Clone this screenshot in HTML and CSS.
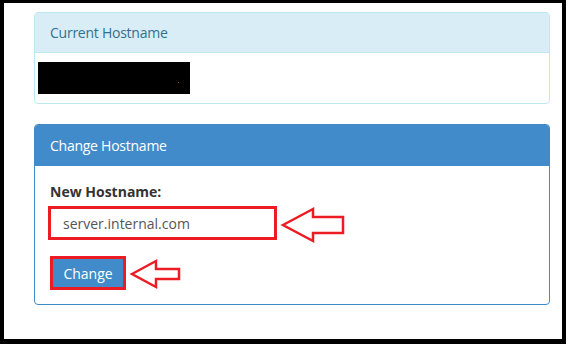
FILE: index.html
```html
<!DOCTYPE html>
<html lang="en">
  <head>
    <meta charset="UTF-8" />
    <link rel="stylesheet" href="styles.css">
  </head>
  <body>
    <div class="frame">
      <div class="panel panel-info">
        <div class="panel-heading">Current Hostname</div>
        <div class="panel-body current-body">
          <div class="redacted"><span class="dot"></span></div>
        </div>
      </div>

      <div class="panel panel-primary">
        <div class="panel-heading">Change Hostname</div>
        <div class="panel-body change-body">
          <label class="field-label" for="hostname">New Hostname:</label>
          <div class="mark input-mark">
            <input type="text" id="hostname" value="server.internal.com" />
          </div>
          <div class="mark button-mark">
            <button id="change-button" type="button">Change</button>
          </div>
        </div>
      </div>
    </div>

    <!-- annotation arrows drawn over the screenshot -->
    <svg class="arrows" width="566" height="344" viewBox="0 0 566 344">
      <polygon points="283,225 313,209 313,217 343,217 343,233 313,233 313,241" />
      <polygon points="132,274 156,261 156,269 179,269 179,279 156,279 156,287" />
    </svg>
  </body>
</html>
```

FILE: styles.css
```css
html,
body {
  margin: 0;
  padding: 0;
  background: #fff;
}

body {
  position: relative;
  width: 566px;
  height: 344px;
  font-family: "Open Sans", "Liberation Sans", sans-serif;
  font-size: 14px;
  color: #333;
}

.frame {
  box-sizing: border-box;
  width: 566px;
  height: 344px;
  border-style: solid;
  border-color: #000;
  border-width: 3px 4px 5px 4px;
  padding: 9px 0 0 30px;
}

.panel {
  width: 516px;
  box-sizing: border-box;
  border: 1px solid;
  border-radius: 4px;
  background: #fff;
  margin-bottom: 20px;
}

.panel-heading {
  box-sizing: border-box;
  height: 40px;
  padding: 0 15px;
  display: flex;
  align-items: center;
  border-bottom: 1px solid;
  border-radius: 3px 3px 0 0;
  letter-spacing: -0.25px;
}

.panel-info {
  border-color: #bce8f1;
}

.panel-info .panel-heading {
  background: #d9edf7;
  border-color: #bce8f1;
  color: #31708f;
}

.panel-primary {
  border-color: #428bca;
}

.panel-primary .panel-heading {
  background: #428bca;
  border-color: #428bca;
  color: #fff;
  height: 41px;
}

.current-body {
  height: 50px;
  padding: 9px 0 0 3px;
  box-sizing: border-box;
}

.redacted {
  position: relative;
  width: 152px;
  height: 32px;
  background: #000;
}

.dot {
  position: absolute;
  left: 140px;
  top: 20px;
  width: 1px;
  height: 1px;
  background: #a33;
}

.change-body {
  box-sizing: border-box;
  height: 138px;
  padding: 17px 0 0 15px;
  display: flex;
  flex-direction: column;
  align-items: flex-start;
}

.field-label {
  font-weight: bold;
  line-height: 18px;
  margin-bottom: 5px;
}

.mark {
  border: 3px solid #ed1c24;
}

.input-mark {
  margin-left: -2px;
  width: 223px;
  height: 28px;
  background: #fff;
}

input#hostname {
  box-sizing: border-box;
  width: 100%;
  height: 100%;
  border: none;
  outline: none;
  padding: 0 0 0 12px;
  font-family: inherit;
  font-size: 14px;
  color: #555;
  background: transparent;
}

.button-mark {
  margin: 16px 0 0 0;
}

#change-button {
  display: block;
  width: 70px;
  height: 28px;
  padding: 0;
  border: none;
  background: #428bca;
  color: #fff;
  font-family: inherit;
  font-size: 14px;
}

.arrows {
  position: absolute;
  top: 0;
  left: 0;
}

.arrows polygon {
  fill: #fff;
  stroke: #ed1c24;
  stroke-width: 2.5;
  stroke-linejoin: miter;
}
```
